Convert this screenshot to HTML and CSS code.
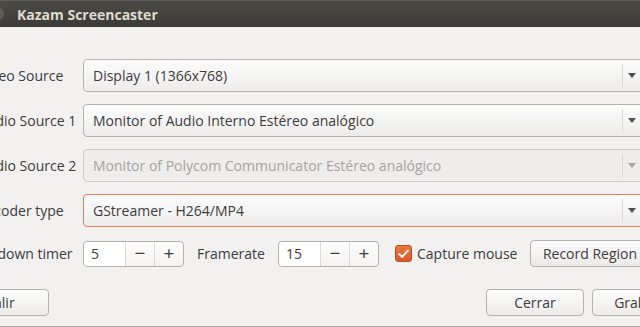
FILE: index.html
```html
<!DOCTYPE html>
<html>
<head>
<meta charset="utf-8">
<link rel="stylesheet" href="styles.css">
</head>
<body>
<div class="screen">
  <header class="titlebar">
    <span class="close-dot"></span>
    <span class="title">Kazam Screencaster</span>
  </header>
  <main class="window">
    <div class="form">
      <label class="lbl">Video Source</label>
      <div class="combo"><span class="combo-text">Display 1 (1366x768)</span><span class="combo-sep"></span><span class="arrow"></span></div>

      <label class="lbl">Audio Source 1</label>
      <div class="combo"><span class="combo-text">Monitor of Audio Interno Estéreo analógico</span><span class="combo-sep"></span><span class="arrow"></span></div>

      <label class="lbl">Audio Source 2</label>
      <div class="combo disabled"><span class="combo-text">Monitor of Polycom Communicator Estéreo analógico</span><span class="combo-sep"></span><span class="arrow"></span></div>

      <label class="lbl">Encoder type</label>
      <div class="combo focused"><span class="combo-text">GStreamer - H264/MP4</span><span class="combo-sep"></span><span class="arrow"></span></div>
    </div>

    <div class="options">
      <label class="lbl countdown">Countdown timer</label>
      <div class="spin">
        <span class="spin-value">5</span>
        <span class="spin-btn">&minus;</span>
        <span class="spin-btn">+</span>
      </div>
      <label class="lbl framerate">Framerate</label>
      <div class="spin">
        <span class="spin-value">15</span>
        <span class="spin-btn">&minus;</span>
        <span class="spin-btn">+</span>
      </div>
      <span class="check">
        <svg width="16" height="16" viewBox="0 0 16 16"><path d="M3.5 8.2 L6.6 11.2 L12.6 4.4" fill="none" stroke="#fff" stroke-width="2" stroke-linecap="round" stroke-linejoin="round"/></svg>
      </span>
      <span class="check-label">Capture mouse</span>
      <button class="btn region">Record Region</button>
    </div>

    <div class="actions">
      <button class="btn salir">Salir</button>
      <span class="spacer"></span>
      <button class="btn cerrar">Cerrar</button>
      <button class="btn grabar">Grabar</button>
    </div>
  </main>
</div>
</body>
</html>
```
FILE: styles.css
```css
* { box-sizing: border-box; }
html, body {
  margin: 0;
  padding: 0;
  width: 640px;
  height: 327px;
  overflow: hidden;
  background: #f2f1f0;
}
body {
  font-family: "Open Sans", "Noto Sans", sans-serif;
  font-size: 14px;
  color: #3c3c3c;
}
.screen {
  width: 640px;
  height: 327px;
  overflow: hidden;
  border-bottom: 1px solid #a9a7a3;
}
.titlebar {
  height: 27px;
  background: linear-gradient(#4b4a45, #3c3b37);
  border-top: 1px solid #5e5d58;
  display: flex;
  align-items: center;
}
.close-dot {
  width: 14px;
  height: 14px;
  border-radius: 50%;
  background: #5c5b56;
  margin-left: -10px;
  flex: none;
}
.title {
  margin-left: 13px;
  color: #dfdbd2;
  font-family: "Open Sans", sans-serif;
  font-weight: 700;
  font-size: 14px;
}
.window {
  margin-left: -22px;
  width: 670px;
  padding-top: 32px;
}
.form {
  display: grid;
  grid-template-columns: 105px 1fr;
  row-gap: 12px;
  align-items: center;
}
.lbl {
  white-space: nowrap;
  color: #3c3c3c;
}
.combo {
  height: 33px;
  border: 1px solid #b4b2ad;
  border-radius: 4px;
  background: linear-gradient(#fdfdfd, #edeceb);
  display: flex;
  align-items: center;
  padding-left: 9px;
}
.combo-text {
  flex: 1;
  white-space: nowrap;
  overflow: hidden;
}
.combo-sep {
  width: 1px;
  height: 23px;
  background: #dcdad7;
  margin-right: 5px;
}
.arrow {
  width: 0;
  height: 0;
  border-left: 4px solid transparent;
  border-right: 4px solid transparent;
  border-top: 5px solid #505050;
  margin-right: 11px;
}
.combo.disabled {
  background: #eeedec;
  border-color: #cfcdca;
  color: #a6a4a1;
}
.combo.disabled .arrow { border-top-color: #aaa8a5; }
.combo.focused {
  border-color: #e4825a;
}
.options {
  display: flex;
  align-items: center;
  margin-top: 13px;
  height: 27px;
}
.options > * { flex: none; }
.countdown {
  margin-left: -20px;
  width: 125px;
}
.spin {
  display: flex;
  height: 26px;
  width: 101px;
  border: 1px solid #b4b2ad;
  border-radius: 4px;
  background: linear-gradient(#fdfdfd, #f4f3f2);
  align-items: stretch;
}
.spin-value {
  flex: 1;
  padding-left: 7px;
  display: flex;
  align-items: center;
  background: #fff;
  border-radius: 4px 0 0 4px;
}
.spin-btn {
  width: 29px;
  border-left: 1px solid #dcdad7;
  display: flex;
  align-items: center;
  justify-content: center;
  font-size: 19px;
  color: #3c3c3c;
  line-height: 1;
}
.framerate {
  margin-left: 13px;
  width: 81px;
}
.check {
  margin-left: 16px;
  width: 17px;
  height: 17px;
  border-radius: 3px;
  background: linear-gradient(#eb7745, #d85b28);
  border: 1px solid #b94d22;
  display: flex;
  align-items: center;
  justify-content: center;
}
.check svg { display: block; }
.check-label {
  margin-left: 5px;
  width: 100px;
  white-space: nowrap;
}
.btn {
  font-family: inherit;
  font-size: 14px;
  color: #3c3c3c;
  height: 27px;
  border: 1px solid #b4b2ad;
  border-radius: 4px;
  background: linear-gradient(#fcfcfc, #ecebea);
  padding: 0 10px;
  white-space: nowrap;
}
.region {
  margin-left: 13px;
  width: 120px;
}
.actions {
  display: flex;
  align-items: center;
  margin-top: 22px;
  margin-right: -34px;
}
.salir {
  width: 97px;
  margin-left: -26px;
}
.spacer { flex: 1; }
.cerrar { width: 98px; }
.grabar { width: 90px; margin-left: 8px; }
```
